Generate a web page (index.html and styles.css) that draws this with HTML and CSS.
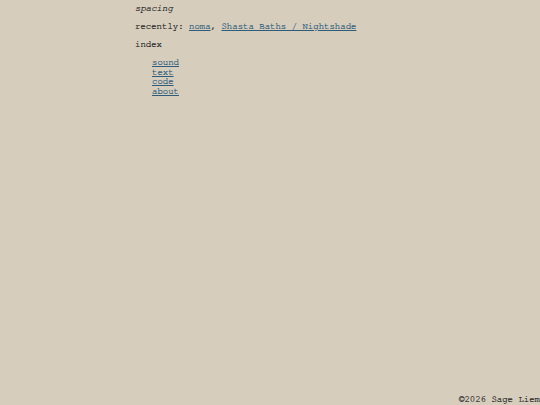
FILE: index.html
```html
<!DOCTYPE html>
<html>
<head>
<meta charset="utf-8">
<link rel="stylesheet" href="styles.css">
</head>
<body>
<div class="page">
  <main class="main">
    <p class="title">spacing</p>
    <p class="line">recently: <a href="#">noma</a>, <a href="#">Shasta Baths / Nightshade</a></p>
    <p class="line">index</p>
    <ul class="index">
      <li><a href="#">sound</a></li>
      <li><a href="#">text</a></li>
      <li><a href="#">code</a></li>
      <li><a href="#">about</a></li>
    </ul>
  </main>
  <footer class="footer">©2026 Sage Liem</footer>
</div>
</body>
</html>
```
FILE: styles.css
```css
html, body {
  margin: 0;
  padding: 0;
  background: #d6cdbd;
}
body {
  font-family: "FreeMono", "Courier New", monospace;
  font-size: 9px;
  line-height: 9.7px;
  color: #222222;
  -webkit-text-stroke: 0.2px currentColor;
}
.page {
  display: flex;
  flex-direction: column;
  min-height: 100vh;
}
.main {
  padding: 4px 0 0 135px;
}
.main p {
  margin: 0 0 8.3px 0;
}
.title {
  font-style: italic;
}
.index {
  list-style: none;
  margin: 0;
  padding: 0 0 0 17px;
}
a {
  color: #2e5c7a;
  text-decoration: underline;
}
.footer {
  margin-top: auto;
  text-align: right;
}
```
